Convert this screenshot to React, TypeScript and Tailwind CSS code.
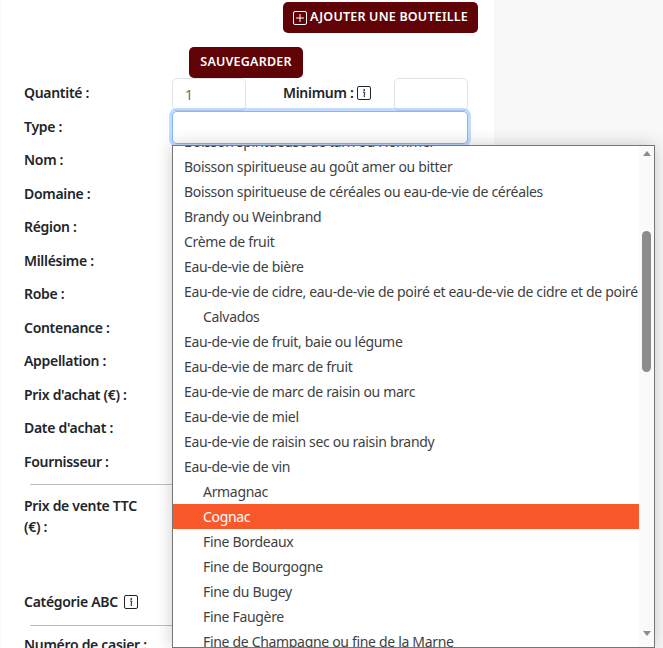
const FONT = "font-['Noto_Sans','Open_Sans',sans-serif]"

const LABELS = ['Type :', 'Nom :', 'Domaine :', 'Région :', 'Millésime :', 'Robe :', 'Contenance :', 'Appellation :', "Prix d'achat (€) :", "Date d'achat :", 'Fournisseur :']

const OPTIONS: { text: string; indent?: boolean; active?: boolean }[] = [
  { text: 'Boisson spiritueuse de tarn ou Hommer' },
  { text: 'Boisson spiritueuse au goût amer ou bitter' },
  { text: 'Boisson spiritueuse de céréales ou eau-de-vie de céréales' },
  { text: 'Brandy ou Weinbrand' },
  { text: 'Crème de fruit' },
  { text: 'Eau-de-vie de bière' },
  { text: 'Eau-de-vie de cidre, eau-de-vie de poiré et eau-de-vie de cidre et de poiré' },
  { text: 'Calvados', indent: true },
  { text: 'Eau-de-vie de fruit, baie ou légume' },
  { text: 'Eau-de-vie de marc de fruit' },
  { text: 'Eau-de-vie de marc de raisin ou marc' },
  { text: 'Eau-de-vie de miel' },
  { text: 'Eau-de-vie de raisin sec ou raisin brandy' },
  { text: 'Eau-de-vie de vin' },
  { text: 'Armagnac', indent: true },
  { text: 'Cognac', indent: true, active: true },
  { text: 'Fine Bordeaux', indent: true },
  { text: 'Fine de Bourgogne', indent: true },
  { text: 'Fine du Bugey', indent: true },
  { text: 'Fine Faugère', indent: true },
  { text: 'Fine de Champagne ou fine de la Marne', indent: true },
]

function InfoIcon() {
  return (
    <svg width="14" height="14" viewBox="0 0 14 14" fill="none" className="shrink-0">
      <rect x="0.5" y="0.5" width="13" height="13" rx="1.5" stroke="#212529" />
      <circle cx="7.2" cy="4" r="0.9" fill="#212529" />
      <path d="M6 6.2h1.8L7 10.4h1" stroke="#212529" strokeWidth="1" />
    </svg>
  )
}

function Dropdown() {
  return (
    <div className="absolute left-[172px] top-[145px] w-[483px] h-[503px] flex bg-white border border-[#767676] shadow-[0_0_16px_rgba(0,0,0,0.2)] overflow-hidden">
      <div className="w-[467px] h-[503px] overflow-hidden">
        <div className="-mt-[17px]">
          {OPTIONS.map((o) => (
            <div
              key={o.text}
              className={`h-[25px] leading-[25px] text-[14px] tracking-[-0.32px] whitespace-nowrap ${o.indent ? 'pl-[30px]' : 'pl-[11px]'} ${o.active ? 'bg-[#f9582b] text-white' : 'text-[#3f3f3f]'}`}
            >
              {o.text}
            </div>
          ))}
        </div>
      </div>
      <div className="w-[15px] bg-[#fafafa] flex flex-col items-center">
        <div className="mt-[5px] w-0 h-0 border-x-[4.5px] border-x-transparent border-b-[5px] border-b-[#8c8c8c]" />
        <div className="mt-[75px] w-[9px] h-[141px] rounded-full bg-[#8c8c8c]" />
        <div className="mt-[259px] w-0 h-0 border-x-[4.5px] border-x-transparent border-t-[5px] border-t-[#8c8c8c]" />
      </div>
    </div>
  )
}

export default function App() {
  return (
    <div className={`relative h-[648px] w-[663px] overflow-hidden bg-[#f8f8f8] ${FONT}`}>
      <div className="ml-px w-[493px] h-[648px] bg-white pt-[2px] text-[14px] text-[#212529]">
        <div className="flex justify-end pr-[16px]">
          <button className="h-[31px] w-[195px] flex items-center justify-center gap-[3px] rounded-[5px] bg-[#600307] text-white text-[12.5px] font-semibold tracking-[0.2px]">
            <svg width="14" height="14" viewBox="0 0 14 14" fill="none" className="shrink-0">
              <rect x="0.5" y="0.5" width="13" height="13" rx="1.5" stroke="white" />
              <path d="M7 3v8M3 7h8" stroke="white" />
            </svg>
            AJOUTER UNE BOUTEILLE
          </button>
        </div>
        <div className="ml-[188px] mt-[14px] h-[31px] w-[114px] flex items-center justify-center rounded-[5px] bg-[#600307] text-white text-[12.5px] font-semibold tracking-[0.2px]">
          SAUVEGARDER
        </div>

        <form className="pl-[23px] pr-[26px] font-semibold tracking-[-0.3px]">
          <div className="flex h-[33px]">
            <div className="w-[148px] pt-[4px]">Quantité :</div>
            <div className="w-[74px] h-[33px] rounded-[5px] border border-[#dee2e6] px-[12px] pt-[5px] font-normal text-[#6b6b6b]">1</div>
            <div className="ml-[37px] w-[111px] flex items-center h-[29px] gap-[4px]">
              Minimum :
              <InfoIcon />
            </div>
            <div className="w-[74px] h-[33px] rounded-[5px] border border-[#dee2e6]" />
          </div>

          <div className="relative pt-[3.5px]">
            {LABELS.map((label) => (
              <div key={label} className="h-[33.5px] leading-[24px]">{label}</div>
            ))}
            <div className="absolute left-[148px] top-[0px] w-[296px] h-[33px] rounded-[5px] border border-[#86b7fe] bg-white shadow-[0_0_0_3px_rgba(13,110,253,0.25)]" />
          </div>

          <div className="mt-[0.5px] h-px ml-[6px] bg-[#bdbdbd]" />
          <div className="mt-[10px] w-[130px] leading-[21px]">Prix de vente TTC (€) :</div>
          <div className="mt-[53px] flex items-center gap-[6px] leading-[24px]">
            Catégorie ABC
            <InfoIcon />
          </div>
          <div className="mt-[11px] h-px ml-[6px] bg-[#bdbdbd]" />
          <div className="mt-[7px] leading-[24px]">Numéro de casier :</div>
        </form>
      </div>
      <Dropdown />
    </div>
  )
}
